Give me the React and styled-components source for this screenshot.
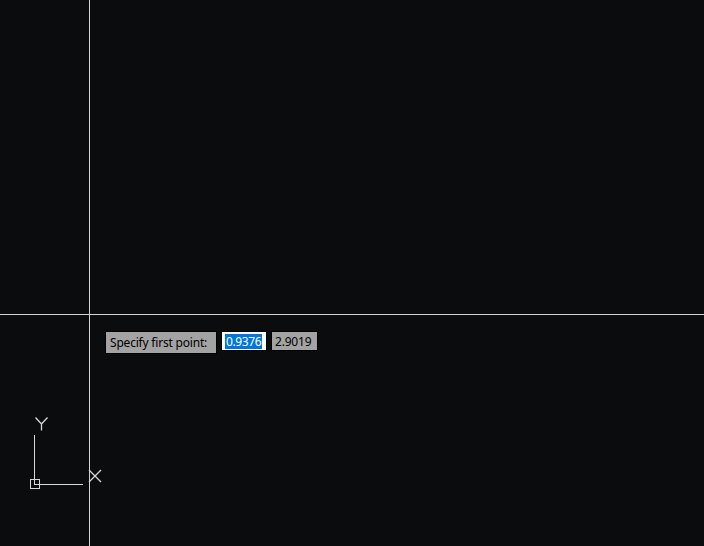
import React from "react";
import styled, { createGlobalStyle } from "styled-components";

const GlobalStyle = createGlobalStyle`
    html, body {
        margin: 0;
        padding: 0;
        background: #0b0c0e;
    }
    body {
        font-family: "Noto Sans", "Open Sans", sans-serif;
    }
`;

const Canvas = styled.div`
    position: relative;
    width: 704px;
    height: 546px;
    overflow: hidden;
    background: #0b0c0e;
`;

const CrossLine = styled.div`
    position: absolute;
    background: #d4d4d4;
    ${(p) =>
        p.$vertical
            ? `left: ${p.$at}px; top: 0; bottom: 0; width: 1px;`
            : `top: ${p.$at}px; left: 0; right: 0; height: 1px;`}
`;

const Prompt = styled.div`
    position: absolute;
    left: 105px;
    top: 331px;
    display: flex;
    align-items: flex-start;
    gap: 4px;
`;

const Field = styled.div`
    box-sizing: border-box;
    flex-shrink: 0;
    white-space: nowrap;
    height: ${(p) => (p.$label ? "23px" : "20px")};
    padding: 0 ${(p) => (p.$label ? "4px" : "3px")};
    display: flex;
    align-items: center;
    font-size: 12px;
    letter-spacing: -0.2px;
    color: #000;
    background: ${(p) => (p.$active ? "#ffffff" : "#a3a3a3")};
    border: 1px solid #000;
    width: ${(p) => p.$w}px;
`;

const Selected = styled.span`
    background: #0078d7;
    color: #fff;
    padding: 0 1px;
    line-height: 15px;
    letter-spacing: -0.4px;
`;

const UcsIcon = styled.svg`
    position: absolute;
    left: 25px;
    top: 412px;
`;

export default function App() {
    return (
        <>
            <GlobalStyle />
            <Canvas>
                <CrossLine $vertical $at={89} />
                <CrossLine $at={314} />
                <Prompt>
                    <Field $label $w={112}>Specify first point:</Field>
                    <Field $active $w={46}>
                        <Selected>0.9376</Selected>
                    </Field>
                    <Field $w={47}>2.9019</Field>
                </Prompt>
                <UcsIcon width="85" height="82" viewBox="0 0 85 82">
                    <g stroke="#d8d8d8" strokeWidth="1" fill="none" shapeRendering="crispEdges">
                        <path d="M9.5 23 V72.5 H58" />
                        <rect x="5.5" y="67.5" width="9" height="9" />
                    </g>
                    <g stroke="#d8d8d8" strokeWidth="1.3" fill="none">
                        <path d="M10.5 5.5 L16.5 12 L22.5 5.5 M16.5 12 V18.5" />
                        <path d="M64 58 L76 70 M76 58 L64 70" />
                    </g>
                </UcsIcon>
            </Canvas>
        </>
    );
}
